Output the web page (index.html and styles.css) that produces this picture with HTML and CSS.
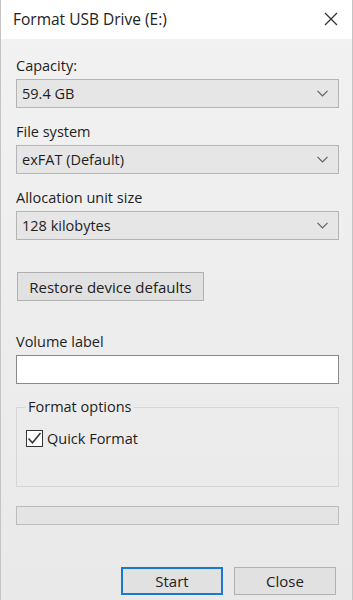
FILE: index.html
```html
<!DOCTYPE html>
<html>
<head>
<meta charset="utf-8">
<link rel="stylesheet" href="styles.css">
</head>
<body>
<div class="window">
  <div class="titlebar">
    <span class="title">Format USB Drive (E:)</span>
    <svg class="close-x" width="14" height="14" viewBox="0 0 14 14"><path d="M1 1 L13 13 M13 1 L1 13" stroke="#333" stroke-width="1.3" fill="none"/></svg>
  </div>
  <div class="content">
    <div class="label">Capacity:</div>
    <div class="select"><span>59.4 GB</span><svg class="chev" width="11" height="7" viewBox="0 0 11 7"><path d="M0.5 0.8 L5.5 5.8 L10.5 0.8" stroke="#606060" stroke-width="1.2" fill="none"/></svg></div>
    <div class="label gap">File system</div>
    <div class="select"><span>exFAT (Default)</span><svg class="chev" width="11" height="7" viewBox="0 0 11 7"><path d="M0.5 0.8 L5.5 5.8 L10.5 0.8" stroke="#606060" stroke-width="1.2" fill="none"/></svg></div>
    <div class="label gap">Allocation unit size</div>
    <div class="select"><span>128 kilobytes</span><svg class="chev" width="11" height="7" viewBox="0 0 11 7"><path d="M0.5 0.8 L5.5 5.8 L10.5 0.8" stroke="#606060" stroke-width="1.2" fill="none"/></svg></div>
    <div class="restore-row"><button class="btn restore">Restore device defaults</button></div>
    <div class="label vol">Volume label</div>
    <div class="input"></div>
    <fieldset class="group">
      <legend>Format options</legend>
      <div class="check-row">
        <span class="checkbox"><svg width="15" height="15" viewBox="0 0 15 15"><path d="M1.5 7.5 L5.5 11.8 L13.5 2" stroke="#333" stroke-width="1.5" fill="none"/></svg></span>
        <span>Quick Format</span>
      </div>
    </fieldset>
    <div class="progress"></div>
    <div class="actions">
      <button class="btn action primary">Start</button>
      <button class="btn action">Close</button>
    </div>
  </div>
</div>
</body>
</html>
```

FILE: styles.css
```css
* { box-sizing: border-box; }
html, body {
  margin: 0;
  padding: 0;
  background: #f0f0f0;
}
body {
  font-family: "Open Sans", "Noto Sans", sans-serif;
  font-size: 14.5px;
  color: #1e1e1e;
}
.window {
  width: 353px;
  height: 600px;
  border-left: 1px solid #c4c4c4;
  border-right: 1px solid #c4c4c4;
  background: linear-gradient(#f2f2f2, #e9e9e9);
  display: flex;
  flex-direction: column;
}
.titlebar {
  height: 39px;
  background: #fff;
  display: flex;
  align-items: center;
  justify-content: space-between;
  padding: 0 14px 1px 12px;
}
.title {
  font-size: 15.5px;
  color: #222;
}
.close-x { display: block; }
.content {
  padding: 17px 13px 0 15px;
  display: flex;
  flex-direction: column;
}
.label {
  height: 20px;
  line-height: 20px;
  margin-bottom: 3px;
}
.label.gap { margin-top: 14px; }
.select {
  height: 29px;
  border: 1px solid #b4b4b4;
  background: #e6e6e6;
  display: flex;
  align-items: center;
  justify-content: space-between;
  padding: 0 10px 0 5px;
}
.chev { display: block; }
.restore-row {
  margin-top: 32px;
  padding-left: 1px;
}
.btn {
  font-family: inherit;
  font-size: 15px;
  color: #222;
  background: #e1e1e1;
  border: 1px solid #b0b0b0;
  margin: 0;
  padding: 0;
}
.restore {
  width: 187px;
  height: 29px;
}
.label.vol { margin-top: 31px; }
.input {
  height: 29px;
  background: #fff;
  border: 1px solid #8a8a8a;
}
.group {
  margin: 13px 0 0 0;
  border: 1px solid #d6d6d6;
  padding: 0 8px 38px 9px;
}
.group legend {
  padding: 0 2px;
  line-height: 20px;
  margin-left: 0;
}
.check-row {
  display: flex;
  align-items: center;
  gap: 4px;
  margin-top: 11px;
  height: 20px;
}
.checkbox {
  width: 17px;
  height: 17px;
  border: 1px solid #333;
  background: #fff;
  display: flex;
  align-items: center;
  justify-content: center;
}
.checkbox svg { display: block; }
.progress {
  margin-top: 19px;
  height: 19px;
  border: 1px solid #bcbcbc;
  background: #e4e4e4;
}
.actions {
  margin-top: 42px;
  display: flex;
  justify-content: flex-end;
  gap: 11px;
  padding-right: 3px;
}
.action {
  width: 102px;
  height: 28px;
}
.action.primary {
  border: 2px solid #1a78cf;
}
```
